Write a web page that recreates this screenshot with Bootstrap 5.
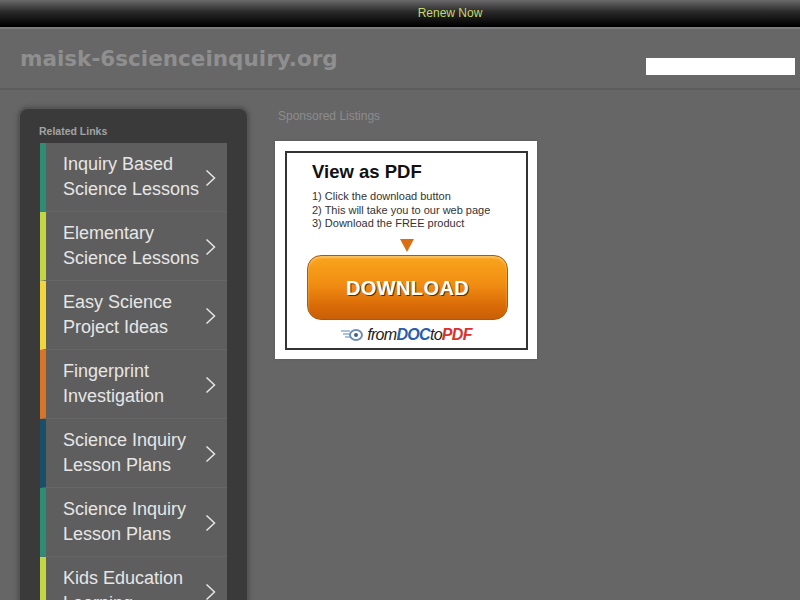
<!DOCTYPE html>
<html lang="en"><head><meta charset="utf-8"><title>maisk-6scienceinquiry.org</title>
<link href="https://cdn.jsdelivr.net/npm/bootstrap@5.3.0/dist/css/bootstrap.min.css" rel="stylesheet">
<style>
html,body{height:600px;overflow:hidden}
body{background:#666;font-family:"Liberation Sans",Arial,sans-serif;color:#ddd}
.topstrip{height:27px;background:linear-gradient(#6a6a6a,#2a2a2a 45%,#000);border-bottom:1px solid #000;font-size:12px;color:#c5d86d;padding-top:6px;line-height:15px;padding-left:100px}
.topline{height:2px;background:#7d7d7d}
.headbar{height:61px;border-bottom:2px solid #5c5c5c;background:#676767;padding:0 5px 0 20px}
.sitename{font-family:"DejaVu Sans",Verdana,sans-serif;font-weight:700;font-size:21.5px;color:#8f8f8f;line-height:26px;margin-top:17px}
.searchbox{width:149px;height:17px;background:#fff;margin-top:29px;border:0;padding:0}
.mainrow{padding:19px 0 0 20px}
.sidepanel{width:227px;flex:none;background:#3a3a3a;border-radius:8px 8px 0 0;box-shadow:0 0 0 2px #555,0 0 5px 2px #4e4e4e;padding:15px 20px 0;height:500px;overflow:hidden}
.sidetitle{font-size:10.5px;font-weight:700;color:#a3a3a3;line-height:14px;margin-bottom:5px;margin-left:-1px}
.linkitem{height:69px;background:#5e5e5e;border-left:6px solid #2e8b74;border-bottom:1px solid #666;padding:8.5px 0 0 17px;font-size:18px;line-height:25px;color:#e6e6e6;text-decoration:none}
.linkitem:hover{color:#fff}
.stripe-b{border-left-color:#c3d545}
.stripe-c{border-left-color:#f0d63c}
.stripe-d{border-left-color:#d8732a}
.stripe-e{border-left-color:#1a4f68}
.chev{width:11px;height:18px;flex:none;margin:17px 11px 0 0}
.adcol{margin-left:28px;padding-top:0}
.sponsor{font-size:12px;line-height:15px;color:#8c8c8c;margin:0 0 17px 3px;padding-top:0}
.adbox{width:262px;height:218px;background:#fff;padding:10px 9px 9px 10px;box-shadow:0 0 2px #555}
.adframe{height:199px;border:2px solid #333;padding:8px 20px 0;color:#222}
.adhead{font-size:18.5px;font-weight:700;line-height:22px;color:#111;margin:0 0 0 5px}
.adsteps{font-size:11px;line-height:13.7px;margin:7px 0 0 5px;color:#333}
.adarrow{width:0;height:0;border-left:7.5px solid transparent;border-right:7.5px solid transparent;border-top:13px solid #d96f12;margin:8px auto 3px;position:relative;left:0}
.dlbtn{width:201px;height:65px;border-radius:14px;margin-left:0;background:linear-gradient(#f9a51d,#f18d12 45%,#d96a08 80%,#c95f06);border:1px solid #a85a10;box-shadow:inset 0 2px 2px #fbc060;font-family:"Liberation Sans",Arial,sans-serif;font-weight:700;font-size:20px;letter-spacing:.4px;color:#fff;text-shadow:1px 1px 0 #5b3208;padding:0}
.adlogo{font-size:16px;line-height:20px;font-style:italic;letter-spacing:-.7px;margin-top:5px;color:#222;gap:2px}
.adlogo b{font-weight:700}
.logo-doc{color:#2a5ea8}
.logo-pdf{color:#d8322a}
</style></head>
<body>
<div class="topstrip text-center"><a class="text-decoration-none renewlink" style="color:inherit" href="#">Renew Now</a></div>
<div class="topline"></div>
<header class="headbar d-flex justify-content-between align-items-start">
  <div class="sitename">maisk-6scienceinquiry.org</div>
  <div class="searchbox"></div>
</header>
<main class="mainrow d-flex">
  <aside class="sidepanel">
    <div class="sidetitle">Related Links</div>
    <a href="#" class="linkitem d-flex justify-content-between"><span>Inquiry Based<br>Science Lessons</span><svg class="chev" viewBox="0 0 11 18"><path d="M1.5 1.5 9.5 9l-8 7.5" fill="none" stroke="#e6e6e6" stroke-width="1.5"/></svg></a>
    <a href="#" class="linkitem stripe-b d-flex justify-content-between"><span>Elementary<br>Science Lessons</span><svg class="chev" viewBox="0 0 11 18"><path d="M1.5 1.5 9.5 9l-8 7.5" fill="none" stroke="#e6e6e6" stroke-width="1.5"/></svg></a>
    <a href="#" class="linkitem stripe-c d-flex justify-content-between"><span>Easy Science<br>Project Ideas</span><svg class="chev" viewBox="0 0 11 18"><path d="M1.5 1.5 9.5 9l-8 7.5" fill="none" stroke="#e6e6e6" stroke-width="1.5"/></svg></a>
    <a href="#" class="linkitem stripe-d d-flex justify-content-between"><span>Fingerprint<br>Investigation</span><svg class="chev" viewBox="0 0 11 18"><path d="M1.5 1.5 9.5 9l-8 7.5" fill="none" stroke="#e6e6e6" stroke-width="1.5"/></svg></a>
    <a href="#" class="linkitem stripe-e d-flex justify-content-between"><span>Science Inquiry<br>Lesson Plans</span><svg class="chev" viewBox="0 0 11 18"><path d="M1.5 1.5 9.5 9l-8 7.5" fill="none" stroke="#e6e6e6" stroke-width="1.5"/></svg></a>
    <a href="#" class="linkitem d-flex justify-content-between"><span>Science Inquiry<br>Lesson Plans</span><svg class="chev" viewBox="0 0 11 18"><path d="M1.5 1.5 9.5 9l-8 7.5" fill="none" stroke="#e6e6e6" stroke-width="1.5"/></svg></a>
    <a href="#" class="linkitem stripe-b d-flex justify-content-between"><span>Kids Education<br>Learning</span><svg class="chev" viewBox="0 0 11 18"><path d="M1.5 1.5 9.5 9l-8 7.5" fill="none" stroke="#e6e6e6" stroke-width="1.5"/></svg></a>
  </aside>
  <section class="adcol">
    <p class="sponsor">Sponsored Listings</p>
    <div class="adbox">
      <div class="adframe">
        <p class="adhead">View as PDF</p>
        <p class="adsteps">1) Click the download button<br>2) This will take you to our web page<br>3) Download the FREE product</p>
        <div class="adarrow"></div>
        <button type="button" class="btn dlbtn d-block">DOWNLOAD</button>
        <div class="adlogo d-flex justify-content-center align-items-center">
          <svg width="24" height="14" viewBox="0 0 24 14"><path d="M0 3h9M2 6h7M4 9h5" stroke="#a9c3e0" stroke-width="2"/><ellipse cx="15" cy="7" rx="6" ry="5" fill="none" stroke="#6f8fb5" stroke-width="2"/><circle cx="15" cy="7" r="2" fill="#3d5f8c"/></svg>
          <span>from<b class="logo-doc">DOC</b>to<b class="logo-pdf">PDF</b></span>
        </div>
      </div>
    </div>
  </section>
</main>
<script src="https://cdn.jsdelivr.net/npm/bootstrap@5.3.0/dist/js/bootstrap.bundle.min.js"></script>
</body></html>
